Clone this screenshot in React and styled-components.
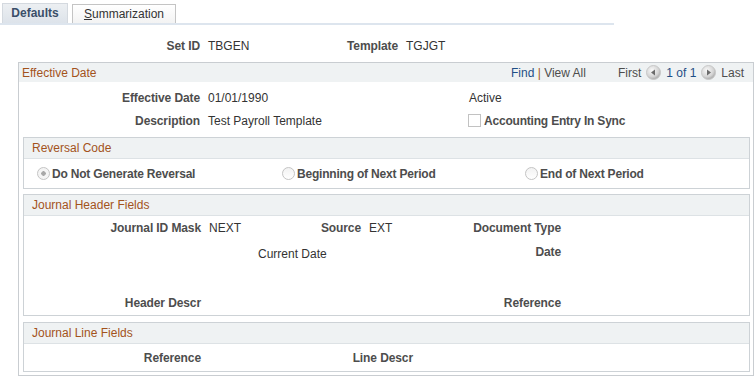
import styled, { createGlobalStyle } from "styled-components";

const GlobalStyle = createGlobalStyle`
  body {
    margin: 0;
    background: #fff;
    font-family: "Liberation Sans", Arial, sans-serif;
    font-size: 12px;
    color: #333;
  }
`;

function NavButton({ dir }) {
  const id = "navgrad-" + dir;
  return (
    <svg width="15" height="15" viewBox="0 0 15 15">
      <defs>
        <radialGradient id={id} cx="40%" cy="35%" r="65%">
          <stop offset="0%" stopColor="#fafafa" />
          <stop offset="70%" stopColor="#d4d4d4" />
          <stop offset="100%" stopColor="#a9a9a9" />
        </radialGradient>
      </defs>
      <circle cx="7.5" cy="7.5" r="7" fill={`url(#${id})`} stroke="#c8c8c8" />
      {dir === "left" ? (
        <polygon points="5,7.5 9,4.5 9,10.5" fill="#6b6b6b" />
      ) : (
        <polygon points="10,7.5 6,4.5 6,10.5" fill="#6b6b6b" />
      )}
    </svg>
  );
}

export default function App() {
  return (
    <Page>
      <GlobalStyle />
      <TabBar>
        <Tab $active>Defaults</Tab>
        <Tab>
          <u>S</u>ummarization
        </Tab>
      </TabBar>

      <FieldGrid $cols="200px 132px 66px auto" $rows="24px" $top={9}>
        <Label>Set ID</Label>
        <Value>TBGEN</Value>
        <Label>Template</Label>
        <Value>TGJGT</Value>
      </FieldGrid>

      <OuterBox>
        <OuterHeader>
          <Title>Effective Date</Title>
          <NavArea>
            <span>
              <Link>Find</Link>
              <Pipe> | </Pipe>
              <span>View All</span>
            </span>
            <Pager>
              <span>First</span>
              <NavButton dir="left" />
              <Link>1 of 1</Link>
              <NavButton dir="right" />
              <span>Last</span>
            </Pager>
          </NavArea>
        </OuterHeader>

        <FieldGrid $cols="181px 268px auto" $rows="23px 23px" $top={4}>
          <Label>Effective Date</Label>
          <Value>01/01/1990</Value>
          <Value $plain>Active</Value>
          <Label>Description</Label>
          <Value>Test Payroll Template</Value>
          <CheckRow>
            <Checkbox />
            <BoldText>Accounting Entry In Sync</BoldText>
          </CheckRow>
        </FieldGrid>

        <GroupBox>
          <GroupHeader>Reversal Code</GroupHeader>
          <RadioRow>
            <RadioItem>
              <Radio $checked />
              <BoldText>Do Not Generate Reversal</BoldText>
            </RadioItem>
            <RadioItem>
              <Radio />
              <BoldText>Beginning of Next Period</BoldText>
            </RadioItem>
            <RadioItem>
              <Radio />
              <BoldText>End of Next Period</BoldText>
            </RadioItem>
          </RadioRow>
        </GroupBox>

        <GroupBox>
          <GroupHeader>Journal Header Fields</GroupHeader>
          <FieldGrid
            $cols="177px 100px 60px 100px 100px auto"
            $rows="24px 24px 26px 25px"
            $bottom={0}
          >
            <Label>Journal ID Mask</Label>
            <Value>NEXT</Value>
            <Label>Source</Label>
            <Value>EXT</Value>
            <Label>Document Type</Label>
            <span />
            <span />
            <Value $span="2 / 5" $indent={49} $shift={4}>
              Current Date
            </Value>
            <Label>Date</Label>
            <span />
            <Spacer />
            <Label>Header Descr</Label>
            <span />
            <span />
            <span />
            <Label>Reference</Label>
            <span />
          </FieldGrid>
        </GroupBox>

        <GroupBox $gap={6}>
          <GroupHeader>Journal Line Fields</GroupHeader>
          <FieldGrid $cols="177px 100px 112px auto" $rows="27px">
            <Label>Reference</Label>
            <span />
            <Label>Line Descr</Label>
            <span />
          </FieldGrid>
        </GroupBox>
      </OuterBox>
    </Page>
  );
}

const Page = styled.div`
  width: 756px;
  height: 384px;
  overflow: hidden;
`;

const TabBar = styled.div`
  display: flex;
  align-items: flex-end;
  gap: 4px;
  width: 612px;
  height: 20px;
  padding: 3px 0 0 2px;
  border-bottom: 2px solid #dde5ee;
`;

const Tab = styled.div`
  box-sizing: border-box;
  height: ${(p) => (p.$active ? 20 : 19)}px;
  width: ${(p) => (p.$active ? 66 : 104)}px;
  display: flex;
  align-items: center;
  justify-content: center;
  border: 1px solid ${(p) => (p.$active ? "#d4d9df" : "#c4c4c4")};
  border-bottom: none;
  background: ${(p) =>
    p.$active
      ? "linear-gradient(#eceff2, #dde3ea)"
      : "linear-gradient(#ffffff, #f3f3f3)"};
  color: ${(p) => (p.$active ? "#3a4e68" : "#333")};
  font-weight: ${(p) => (p.$active ? 700 : 400)};
  font-size: 12px;
  padding-bottom: ${(p) => (p.$active ? 1 : 0)}px;
`;

const FieldGrid = styled.div`
  display: grid;
  grid-template-columns: ${(p) => p.$cols};
  grid-template-rows: ${(p) => p.$rows};
  align-items: center;
  padding-top: ${(p) => p.$top || 0}px;
  padding-bottom: ${(p) => p.$bottom || 0}px;
  line-height: 14px;
`;

const Label = styled.span`
  text-align: right;
  font-weight: 700;
  color: #4d4d4d;
  white-space: nowrap;
  letter-spacing: -0.1px;
`;

const Value = styled.span`
  padding-left: ${(p) => (p.$plain ? 1 : 8 + (p.$indent || 0))}px;
  grid-column: ${(p) => p.$span || "auto"};
  padding-top: ${(p) => p.$shift || 0}px;
  color: #333;
  white-space: nowrap;
`;

const Spacer = styled.div`
  grid-column: 1 / -1;
`;

const OuterBox = styled.div`
  margin: 4px 2px 0 18px;
  border: 1px solid #c9cdd1;
  padding-bottom: 3px;
`;

const OuterHeader = styled.div`
  display: flex;
  align-items: center;
  justify-content: space-between;
  height: 19px;
  padding: 0 9px 0 3px;
  background: #eff2f3;
`;

const Title = styled.span`
  color: #a3531c;
  font-size: 12px;
`;

const NavArea = styled.div`
  display: flex;
  align-items: center;
  gap: 32px;
  color: #4d4d4d;
`;

const Pager = styled.span`
  display: flex;
  align-items: center;
  gap: 5px;
`;

const Link = styled.span`
  color: #1f4f86;
`;

const Pipe = styled.span`
  color: #a3531c;
`;

const CheckRow = styled.span`
  display: flex;
  align-items: center;
  gap: 3px;
`;

const Checkbox = styled.span`
  box-sizing: border-box;
  width: 13px;
  height: 13px;
  border: 1px solid #c2c2c2;
  background: #fff;
`;

const BoldText = styled.span`
  font-weight: 700;
  color: #4d4d4d;
  white-space: nowrap;
  letter-spacing: -0.2px;
`;

const GroupBox = styled.div`
  margin: ${(p) => p.$gap || 5}px 3px 0 4px;
  border: 1px solid #cdd2d6;
`;

const GroupHeader = styled.div`
  height: 20px;
  line-height: 20px;
  padding-left: 8px;
  background: #eff2f3;
  border-bottom: 1px solid #dde2e5;
  color: #a3531c;
`;

const RadioRow = styled.div`
  display: grid;
  grid-template-columns: 245px 243px auto;
  align-items: center;
  height: 29px;
  padding-left: 13px;
`;

const RadioItem = styled.span`
  display: flex;
  align-items: center;
  gap: 2px;
`;

const Radio = styled.span`
  box-sizing: border-box;
  width: 13px;
  height: 13px;
  border-radius: 50%;
  border: 1px solid #c4c4c4;
  background: ${(p) =>
    p.$checked
      ? "radial-gradient(circle, #a8a8a8 0 2px, #f4f4f4 2.5px)"
      : "linear-gradient(#f2f2f2, #ffffff)"};
`;
